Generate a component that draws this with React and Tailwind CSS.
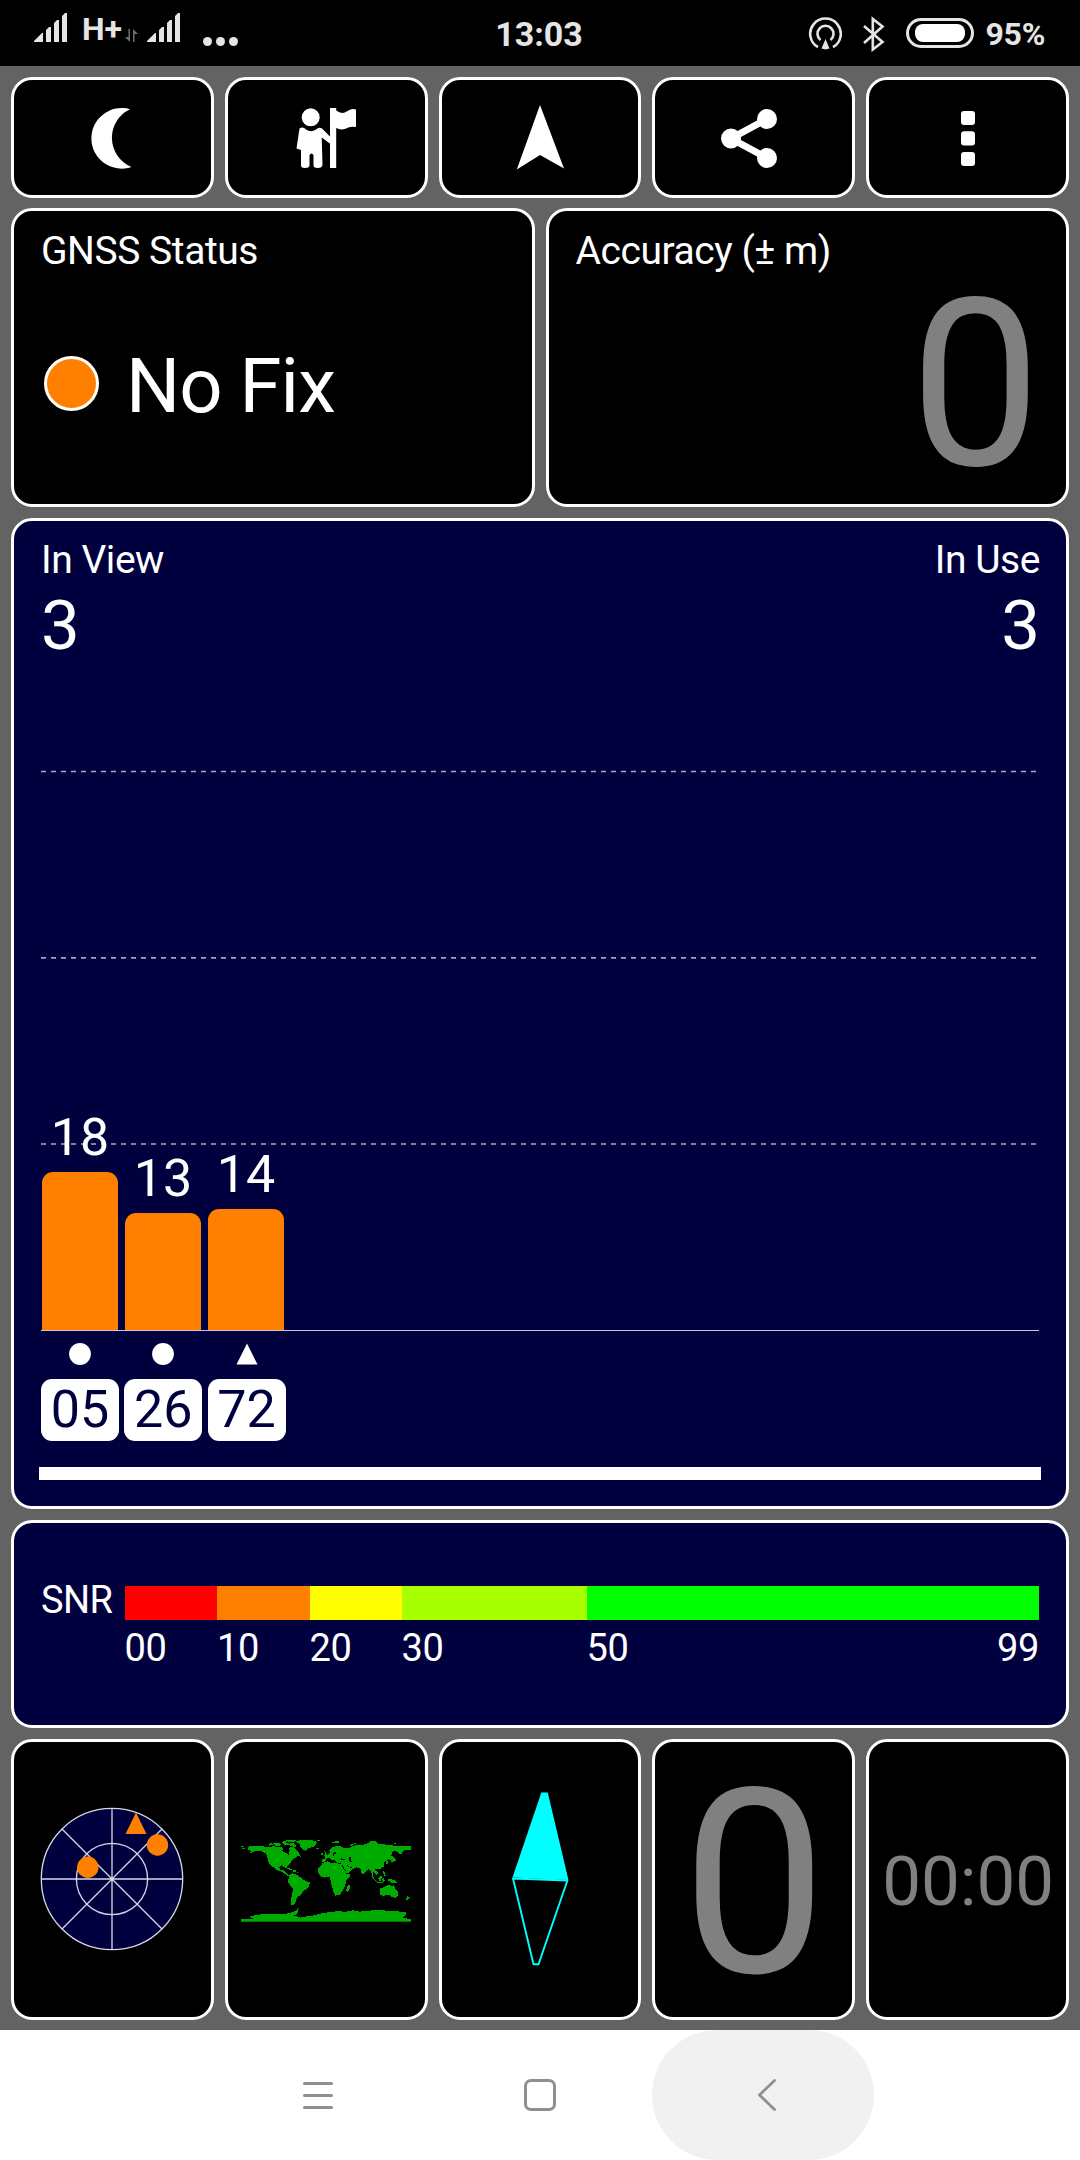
// GPS status dashboard: satellites in view, signal strength and small instrument tiles

const satellites = [
  { id: '05', snr: 18, height: 158, shape: 'circle' },
  { id: '26', snr: 13, height: 117, shape: 'circle' },
  { id: '72', snr: 14, height: 121, shape: 'triangle' },
];

const snrScale = [
  { label: '00', className: 'w-[92.5px] bg-[#ff0000]' },
  { label: '10', className: 'w-[92.5px] bg-[#ff8000]' },
  { label: '20', className: 'w-[92px] bg-[#ffff00]' },
  { label: '30', className: 'w-[185px] bg-[#a8ff00]' },
  { label: '50', className: 'flex-1 bg-[#00ff00]' },
];

const Card = ({ className = '', children }) => (
  <div className={`rounded-[21px] border-[3px] border-white ${className}`}>{children}</div>
);

const Label = ({ children }) => (
  <h2 className="text-[39px] leading-[40px] tracking-[-0.45px]">{children}</h2>
);

const Signal = () => (
  <svg className="w-[34px] h-[30px]" viewBox="0 0 34 30" fill="#e5e5e5">
    <path d="M0 29V28L8 20H9V29ZM12 29V17L15 14H17V29ZM20 29V10L23 7H25V29ZM28 29V3L31 0H33V29Z" />
  </svg>
);

const StatusBar = () => (
  <header className="h-[66px] bg-black text-[#e5e5e5] font-bold grid grid-cols-3">
    <div className="flex items-start pl-[34px] pt-[13px]">
      <Signal />
      <span className="ml-[14px] -mt-[2px] text-[32px] leading-[36px]">H+</span>
      <svg className="ml-[3px] mt-[16px] w-[13px] h-[13px]" viewBox="0 0 13 13" fill="#707070">
        <path d="M3.500 0H5V13L0 8H3.500ZM8 13H9.500V5H13L8 0Z" />
      </svg>
      <div className="ml-[9px]"><Signal /></div>
      <div className="ml-[22px] mt-[24px] flex gap-1">
        <i className="size-[9px] rounded-full bg-[#e5e5e5]" />
        <i className="size-[9px] rounded-full bg-[#e5e5e5]" />
        <i className="size-[9px] rounded-full bg-[#e5e5e5]" />
      </div>
    </div>
    <div className="text-center text-[34px] leading-[68px] pr-[2px]">13:03</div>
    <div className="flex items-start justify-end pr-[35px] pt-[16px]">
      <svg className="w-[34px] h-[36px]" viewBox="807 16 34 36" fill="none" stroke="#e5e5e5" strokeWidth="2.600">
        <path d="M817 47.200A15.300 15.300 0 1 1 832 47.200" />
        <path d="M819.500 40A8 8 0 1 1 829.500 40" />
        <path d="M824.500 39L828.500 48.500L824.500 49.500L820.500 48.500Z" fill="#e5e5e5" stroke="none" />
      </svg>
      <svg className="ml-[21px] w-[22px] h-[36px]" viewBox="862 15 22 36" fill="none" stroke="#e5e5e5" strokeWidth="2.600">
        <path d="M863 25L881.500 41L871.800 48.500V18L881.500 25.500L863 42" />
      </svg>
      <div className="ml-[21px] mt-[2px] w-[68px] h-[30px] rounded-full border-[3px] border-[#e5e5e5] p-[3px] px-[6px]">
        <div className="h-full rounded-[8px] bg-white" />
      </div>
      <span className="ml-[12px] text-[32px] leading-[36px] tracking-[-0.3px]">95%</span>
    </div>
  </header>
);

const toolbarIcons = [
  {
    name: 'moon',
    viewBox: '81 97 80 80',
    margin: 'ml-[68px]',
    shape: <path d="M129 109.200A30.300 30.300 0 1 0 130.500 167A31.600 31.600 0 0 1 129 109.200Z" />,
  },
  {
    name: 'guide',
    viewBox: '286 97 80 80',
    margin: 'ml-[58px]',
    shape: (
      <>
        <circle cx="310.700" cy="117.300" r="9" />
        <path d="M299.500 128.500Q303 126 306 129.500Q311 133 316 129.500Q319 126.500 322 128.500L330.500 137V144L321.700 137.500L322.500 165Q322 168 318 168Q313.500 168 313.500 165.500V155Q311.500 152 309.500 155V165.500Q309 168 305 168Q301 168 301 165.500V150L296.500 148.500Z" />
        <path d="M330 108H336.200V110.500Q342 115 347.500 111Q352 108 356 109.500V127Q350 126 346 128.500Q341 130.500 336.200 128V168H330Z" />
      </>
    ),
  },
  {
    name: 'arrow',
    viewBox: '500 97 80 80',
    margin: 'ml-[58px]',
    shape: <path d="M540 105L564 168.500L540 155L516.800 169.500Z" />,
  },
  {
    name: 'share',
    viewBox: '706 97 80 80',
    margin: 'ml-[51px]',
    shape: (
      <>
        <circle cx="731" cy="138.500" r="10" />
        <circle cx="767" cy="119" r="10" />
        <circle cx="767" cy="158" r="10" />
        <path d="M767 119L731 138.500L767 158" fill="none" stroke="white" strokeWidth="7" />
      </>
    ),
  },
  {
    name: 'more',
    viewBox: '928 97 80 80',
    margin: 'ml-[59px]',
    shape: (
      <>
        <rect x="961" y="111" width="14" height="14" rx="3" />
        <rect x="961" y="131.300" width="14" height="14.200" rx="3" />
        <rect x="961" y="152" width="14" height="14" rx="3" />
      </>
    ),
  },
];

const Toolbar = () => (
  <div className="grid grid-cols-5 gap-[11px] h-[121px]">
    {toolbarIcons.map(icon => (
      <Card key={icon.name} className="bg-black pt-[17px]">
        <svg className={`size-[80px] ${icon.margin}`} viewBox={icon.viewBox} fill="white">{icon.shape}</svg>
      </Card>
    ))}
  </div>
);

const FixStatus = () => (
  <div className="mt-[10px] grid grid-cols-2 gap-[11px] h-[299px]">
    <Card className="bg-black px-[27px] pt-[20px]">
      <Label>GNSS Status</Label>
      <div className="mt-[75px] flex items-center">
        <span className="ml-[3px] -mt-[6px] size-[55px] rounded-full border-[3px] border-white bg-[#ff8000]" />
        <span className="ml-[27px] text-[76px] leading-[80px] tracking-[-0.95px]">No Fix</span>
      </div>
    </Card>
    <Card className="bg-black pl-[27px] pr-[25px] pt-[20px]">
      <Label>Accuracy (± m)</Label>
      <p className="mt-[35px] text-right text-[233px] leading-[160px] text-[#808080]">0</p>
    </Card>
  </div>
);

const SatelliteChart = () => (
  <Card className="mt-[11px] h-[991px] bg-[#00003f] px-[27px] pt-[19px]">
    <div className="flex justify-between">
      <div>
        <Label>In View</Label>
        <p className="mt-[11px] text-[69px] leading-[70px]">3</p>
      </div>
      <div className="text-right -mr-px">
        <Label>In Use</Label>
        <p className="mt-[11px] text-[69px] leading-[70px]">3</p>
      </div>
    </div>

    <div className="relative mt-[104px] h-[566px] flex items-end gap-[7px] border-b border-[#c8c8d4] pl-px">
      <svg className="absolute left-0 top-0 w-full h-full" fill="none" stroke="#a6a6bc" strokeWidth="1.700" strokeDasharray="5 5">
        <path d="M0 6.500H998M0 192.800H998M0 379H998" />
      </svg>
      {satellites.map(sat => (
        <div key={sat.id} className="relative w-[76px] text-center">
          <div className="text-[52px] leading-[60px] mb-[4px]">{sat.snr}</div>
          <div className="rounded-t-[11px] bg-[#ff8000]" style={{ height: sat.height }} />
        </div>
      ))}
    </div>

    <div className="mt-[12px] flex gap-[5.3px]">
      {satellites.map(sat => (
        <div key={sat.id} className="w-[78px] flex flex-col items-center">
          <svg className="size-[22px]" viewBox="0 0 22 22" fill="white">
            {sat.shape === 'circle' ? <circle cx="11" cy="11" r="10.900" /> : <path d="M11 .5L21.500 21.500H.5Z" />}
          </svg>
          <div className="mt-[14px] w-full h-[62px] rounded-[11px] bg-white text-center text-[52px] leading-[61px] text-[#00003f]">{sat.id}</div>
        </div>
      ))}
    </div>

    <div className="mt-[26px] -mx-[2px] h-[13px] bg-white" />
  </Card>
);

const SnrLegend = () => (
  <Card className="mt-[11px] h-[208px] bg-[#00003f] px-[27px] pt-[58px]">
    <div className="flex">
      <span className="w-[83.5px] text-[38px] leading-[39px] tracking-[-0.6px]">SNR</span>
      <div className="flex-1">
        <div className="mt-[5px] flex h-[34px]">
          {snrScale.map(step => (
            <div key={step.label} className={step.className}>
              <div className="pt-[42px] text-[38px] leading-[40px] tracking-[-0.4px]">{step.label}</div>
            </div>
          ))}
        </div>
        <div className="mt-[8px] text-right text-[38px] leading-[40px] tracking-[-0.4px]">99</div>
      </div>
    </div>
  </Card>
);

const SkyPlot = () => (
  <svg className="w-[146px] h-[146px] -mt-[2px]" viewBox="39 1806 146 146" fill="none" stroke="#d8d8e4" strokeWidth="1.300">
    <circle cx="112" cy="1879" r="70.700" fill="#00003f" />
    <circle cx="112" cy="1879" r="35.600" />
    <path d="M112 1808.500V1949.500M41.500 1879H182.500M62 1829L162 1929M162 1829L62 1929" />
    <g fill="#ff8000" stroke="none">
      <circle cx="87.800" cy="1867.300" r="10.700" />
      <circle cx="157.500" cy="1845" r="10.700" />
      <path d="M136 1812.500L146.500 1834H125.500Z" />
    </g>
  </svg>
);

const WorldMap = () => (
  <svg className="w-[170px] h-[82px]" viewBox="63 120 510 246" fill="#00ab00" shapeRendering="crispEdges">
    {/* Americas */}
    <path d="M84 141L92 137L110 139L124 138L140 141L160 139L184 141L192 147L186 152L198 159L206 166L209 152L206 144L220 140L226 147L232 154L240 163L230 170L224 175L216 181L212 190L204 195L199 201L202 207L196 203L184 196L178 203L182 212L192 210L194 215L201 221L208 226L205 230L196 222L184 215L172 211L162 202L154 198L146 188L142 171L136 159L124 153L106 152L98 157L88 160L94 153L84 150Z" />
    <path d="M208 224L216 220L228 223L240 231L250 240L269 247L268 256L262 266L250 273L244 283L232 292L228 302L222 314L212 314L212 304L215 290L219 266L211 257L204 246Z" />
    <path d="M198 203L210 205L218 210L210 210ZM220 211H229V215H220ZM64 138H72V140H64ZM65 144H75V147H65ZM146 132L154 128L158 134L148 137ZM160 129L176 128L184 132L178 138L162 136ZM186 125L204 122L198 128L210 132L220 138L208 136L192 136ZM196 121L230 121L224 126L204 125ZM210 130L222 130L230 139L222 142ZM224 150L232 153L240 163L242 170L232 168L228 160Z" />
    <path d="M232 122L252 120L288 122L290 128L287 136L276 142L262 146L258 152L250 151L242 142L238 131L228 126ZM286 143L298 143L298 147L288 148ZM231 216h4v3h-4ZM292 121h8v2h-8Z" />
    {/* Europe and Asia */}
    <path d="M306 185L307 177L314 176L315 168L324 163L331 159L328 150L334 144L348 138L368 140L370 145L388 143L402 137L414 135L430 134L444 129L464 128L484 133L506 134L528 138L548 137L573 139V149L558 150L548 153L540 165L536 158L528 153L516 155L514 167L522 172L513 181L505 178L496 184L491 190L491 200L478 208L466 208L475 218L470 226L464 219L458 214L459 228L466 240L456 234L454 215L447 207L440 213L430 224L425 220L421 206L410 202L398 208L384 219L376 220L367 202L360 195L364 188L350 188L340 181L334 179L326 173L319 178L314 187Z" />
    <path d="M304 160h6v4h-6ZM313 153L319 160L321 168L312 168L315 162ZM334 125H344V123H356V128H338ZM388 137L396 131L410 130L402 134L391 139ZM446 125L466 123L470 128H446ZM514 131L528 130L522 134ZM540 154L548 154L542 166ZM522 174L530 180L518 186L512 184ZM498 184h5v7h-5Z" />
    {/* Africa */}
    <path d="M309 188L324 184L332 190L344 187L360 192L372 205L379 221L392 222L388 231L378 243L376 256L371 266L360 284L346 287L340 276L337 262L333 251L330 230L314 233L302 230L295 219L295 206ZM389 254L390 264L384 276L378 272L382 259Z" />
    {/* Oceania */}
    <path d="M457 231L466 240L478 249L471 248L460 238ZM474 235L484 226L486 236L480 244ZM488 209L494 218L498 230L491 226ZM486 238L492 232L494 244L488 246ZM474 247h16v3h-16ZM502 236L522 240L532 250L518 250L506 243ZM479 271L482 264L492 262L502 255L513 254L516 260L521 255L526 266L534 273L534 285L527 294L515 290L506 284L492 287L482 286ZM562 289L571 291L563 300L556 303Z" />
    {/* Antarctica */}
    <path d="M63 357H101L88 349L104 346L130 342L170 341L200 341L210 338L228 333L236 325L232 340L222 347L234 350L240 353L256 350L276 347L300 341L316 338L350 334L378 335L398 331L418 335L458 331L488 331L520 333L556 336L558 338L557 345L548 354L573 357V366H63Z" />
    {/* Inland seas */}
    <path fill="black" d="M386 172L393 171L392 180L395 185L390 186L387 180ZM364 175L376 178L372 181L362 179ZM342 171L336 165L342 163L352 159L346 156L340 158ZM320 181L330 177L338 186L344 179L354 190L342 187L330 187ZM368 195L378 214L374 212L365 197ZM380 192L386 200L400 202L390 203L382 197ZM186 150L200 148L207 156L206 161L196 158Z" />
    <path fill="#007a00" d="M63 362H573V366H63Z" />
  </svg>
);

const Compass = () => (
  <svg className="w-[60px] h-[176px] -mt-[2px]" viewBox="510 1791 60 176" stroke="#00ffff" strokeWidth="1.900">
    <path d="M541 1793.500H547L568 1880L512.500 1877.500Z" fill="#00ffff" stroke="none" />
    <path d="M541 1793.500H547L567.500 1880.300L538.500 1964.300H533.500L513 1878.500L567.500 1880.500" fill="none" />
  </svg>
);

const Instruments = () => (
  <div className="mt-[11px] grid grid-cols-5 gap-[11px] h-[281px]">
    <Card className="bg-black flex items-center justify-center"><SkyPlot /></Card>
    <Card className="bg-black flex items-center justify-center pt-[3px]"><WorldMap /></Card>
    <Card className="bg-black flex items-center justify-center"><Compass /></Card>
    <Card className="bg-black flex items-center justify-center text-[258px] leading-[100px] text-[#808080]">
      <span className="pt-[8px] pl-px">0</span>
    </Card>
    <Card className="bg-black flex items-center justify-center text-[69px] leading-[80px] text-[#808080]">
      <span className="pt-[4px] pl-px">00:00</span>
    </Card>
  </div>
);

const NavBar = () => (
  <nav className="h-[130px] bg-white flex items-center text-[#8f8f8f]">
    <div className="ml-[303px] w-[30px] flex flex-col gap-[9px]">
      <i className="h-[3px] rounded-full bg-current" />
      <i className="h-[3px] rounded-full bg-current" />
      <i className="h-[3px] rounded-full bg-current" />
    </div>
    <div className="ml-[191px] size-[32px] rounded-[7px] border-[3px] border-current" />
    <div className="ml-[96px] w-[222px] h-[130px] rounded-full bg-[#f1f1f1] flex items-center justify-center">
      <svg className="w-[20px] h-[34px] mr-[-8px]" viewBox="757 2078 20 34" fill="none" stroke="currentColor" strokeWidth="2.800" strokeLinecap="round" strokeLinejoin="round">
        <path d="M774.500 2080.500L759.500 2095L774.500 2109.500" />
      </svg>
    </div>
  </nav>
);

const App = () => (
  <div className="w-[1080px] h-[2160px] overflow-hidden bg-[#636363] font-[Roboto,sans-serif] text-white">
    <StatusBar />
    <main className="px-[11px] pt-[11px] h-[1964px]">
      <Toolbar />
      <FixStatus />
      <SatelliteChart />
      <SnrLegend />
      <Instruments />
    </main>
    <NavBar />
  </div>
);

export default App;
